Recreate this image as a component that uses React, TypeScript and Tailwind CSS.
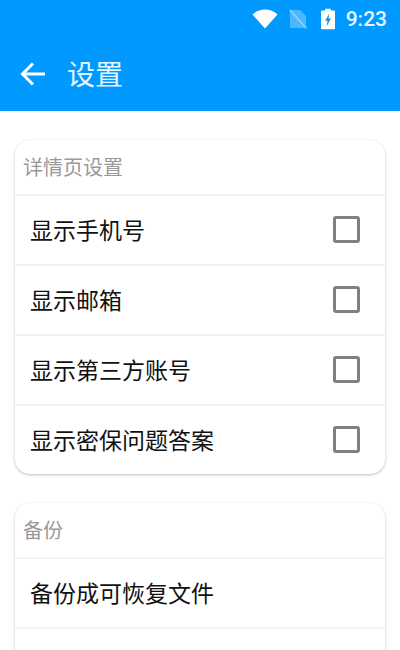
const font = { fontFamily: '"Noto Sans CJK SC", Roboto, sans-serif' };

function Row({ label, checkbox }: { label: string; checkbox?: boolean }) {
  return (
    <div className="flex h-[70px] shrink-0 items-center justify-between border-t-2 border-[#f3f3f3] pb-[2px] pl-[15px] pr-[25px]">
      <span className="text-[23px] leading-none text-[#111111]">{label}</span>
      {checkbox && <div className="h-[27px] w-[27px] rounded-[3px] border-[3px] border-[#808080]" />}
    </div>
  );
}

function Card({ title, children }: { title: string; children: React.ReactNode }) {
  return (
    <section className="mx-[15px] rounded-[15px] bg-white shadow-[0_1px_3px_rgba(0,0,0,0.25)]">
      <div className="flex h-[54px] items-center pb-[1px] pl-[8px] text-[20px] text-[#999999]">{title}</div>
      {children}
    </section>
  );
}

export default function App() {
  return (
    <div style={font} className="flex h-[650px] w-[400px] flex-col overflow-hidden bg-white">
      <header className="h-[111px] shrink-0 bg-[#0099ff] text-white">
        <div className="flex h-[37px] items-center justify-end pr-[13px] pt-[1px]">
          <svg width="26" height="20" viewBox="0 0 26 20" className="mr-[11px]">
            <path d="M0.5 5.5C4 2.2 8.3 0.5 13 0.5s9 1.700 12.500 5L13 19.500z" fill="#fff" />
          </svg>
          <svg width="18" height="20" viewBox="0 0 18 20" className="mr-[14px]">
            <path d="M1 1h10l6 6v12H1z" fill="#fff" opacity="0.3" />
            <path d="M0.5 0.5l17 19" stroke="#fff" strokeWidth="1.3" opacity="0.4" />
          </svg>
          <svg width="14" height="22" viewBox="0 0 15 22" className="mr-[11px]">
            <path d="M4.500 0h6v2H14a1 1 0 0 1 1 1v18a1 1 0 0 1-1 1H1a1 1 0 0 1-1-1V3a1 1 0 0 1 1-1h3.500z" fill="#fff" />
            <path d="M9 5l-4.500 8H7l-1 6 4.500-8.500H8z" fill="#0a8fe8" />
          </svg>
          <span style={{ fontFamily: 'Roboto, sans-serif' }} className="text-[21px] font-medium leading-none text-[#e8f5ff]">9:23</span>
        </div>
        <div className="flex h-[74px] items-center pb-[1px] pl-[20px]">
          <svg width="26" height="26" viewBox="0 0 26 26" fill="none" stroke="#fff" strokeWidth="3">
            <path d="M25 13H3M13 2.500L2.500 13 13 23.500" />
          </svg>
          <h1 className="ml-[21px] pb-[2px] text-[28px] font-normal leading-none text-[#e6f6ff]">设置</h1>
        </div>
      </header>
      <main className="flex flex-col gap-[29px] pt-[29px]">
        <Card title="详情页设置">
          <Row label="显示手机号" checkbox />
          <Row label="显示邮箱" checkbox />
          <Row label="显示第三方账号" checkbox />
          <Row label="显示密保问题答案" checkbox />
        </Card>
        <Card title="备份">
          <Row label="备份成可恢复文件" />
          <Row label="" />
        </Card>
      </main>
    </div>
  );
}
